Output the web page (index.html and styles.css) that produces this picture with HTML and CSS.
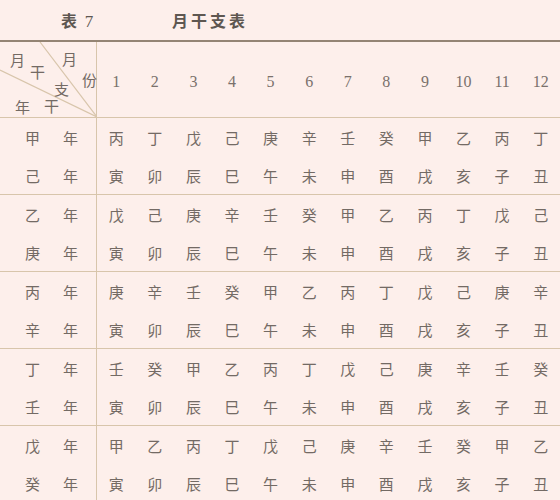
FILE: index.html
```html
<!DOCTYPE html>
<html lang="zh">
<head>
<meta charset="utf-8">
<link rel="stylesheet" href="styles.css">
</head>
<body>
<div class="page">
  <div class="title"><span class="t1">表 <span class="tn">7</span></span><span class="t2">月干支表</span></div>
  <div class="tbl">
    <div class="hrow">
      <div class="corner">
        <svg class="diag" width="97" height="75" viewBox="0 0 97 75"><line x1="0" y1="28" x2="97" y2="75"/><line x1="40" y1="0" x2="97" y2="75"/></svg>
        <span class="ck c1">月</span><span class="ck c2">干</span><span class="ck c3">月</span><span class="ck c4">份</span><span class="ck c5">支</span><span class="ck c6">年</span><span class="ck c7">干</span>
      </div>
      <div class="num">1</div><div class="num">2</div><div class="num">3</div><div class="num">4</div><div class="num">5</div><div class="num">6</div><div class="num">7</div><div class="num">8</div><div class="num">9</div><div class="num">10</div><div class="num">11</div><div class="num">12</div>
    </div>

    <div class="group">
      <div class="lab"><span>甲</span><span>年</span></div>
      <div class="c">丙</div><div class="c">丁</div><div class="c">戊</div><div class="c">己</div><div class="c">庚</div><div class="c">辛</div><div class="c">壬</div><div class="c">癸</div><div class="c">甲</div><div class="c">乙</div><div class="c">丙</div><div class="c">丁</div>
      <div class="lab"><span>己</span><span>年</span></div>
      <div class="c">寅</div><div class="c">卯</div><div class="c">辰</div><div class="c">巳</div><div class="c">午</div><div class="c">未</div><div class="c">申</div><div class="c">酉</div><div class="c">戌</div><div class="c">亥</div><div class="c">子</div><div class="c">丑</div>
    </div>

    <div class="group">
      <div class="lab"><span>乙</span><span>年</span></div>
      <div class="c">戊</div><div class="c">己</div><div class="c">庚</div><div class="c">辛</div><div class="c">壬</div><div class="c">癸</div><div class="c">甲</div><div class="c">乙</div><div class="c">丙</div><div class="c">丁</div><div class="c">戊</div><div class="c">己</div>
      <div class="lab"><span>庚</span><span>年</span></div>
      <div class="c">寅</div><div class="c">卯</div><div class="c">辰</div><div class="c">巳</div><div class="c">午</div><div class="c">未</div><div class="c">申</div><div class="c">酉</div><div class="c">戌</div><div class="c">亥</div><div class="c">子</div><div class="c">丑</div>
    </div>

    <div class="group">
      <div class="lab"><span>丙</span><span>年</span></div>
      <div class="c">庚</div><div class="c">辛</div><div class="c">壬</div><div class="c">癸</div><div class="c">甲</div><div class="c">乙</div><div class="c">丙</div><div class="c">丁</div><div class="c">戊</div><div class="c">己</div><div class="c">庚</div><div class="c">辛</div>
      <div class="lab"><span>辛</span><span>年</span></div>
      <div class="c">寅</div><div class="c">卯</div><div class="c">辰</div><div class="c">巳</div><div class="c">午</div><div class="c">未</div><div class="c">申</div><div class="c">酉</div><div class="c">戌</div><div class="c">亥</div><div class="c">子</div><div class="c">丑</div>
    </div>

    <div class="group">
      <div class="lab"><span>丁</span><span>年</span></div>
      <div class="c">壬</div><div class="c">癸</div><div class="c">甲</div><div class="c">乙</div><div class="c">丙</div><div class="c">丁</div><div class="c">戊</div><div class="c">己</div><div class="c">庚</div><div class="c">辛</div><div class="c">壬</div><div class="c">癸</div>
      <div class="lab"><span>壬</span><span>年</span></div>
      <div class="c">寅</div><div class="c">卯</div><div class="c">辰</div><div class="c">巳</div><div class="c">午</div><div class="c">未</div><div class="c">申</div><div class="c">酉</div><div class="c">戌</div><div class="c">亥</div><div class="c">子</div><div class="c">丑</div>
    </div>

    <div class="group">
      <div class="lab"><span>戊</span><span>年</span></div>
      <div class="c">甲</div><div class="c">乙</div><div class="c">丙</div><div class="c">丁</div><div class="c">戊</div><div class="c">己</div><div class="c">庚</div><div class="c">辛</div><div class="c">壬</div><div class="c">癸</div><div class="c">甲</div><div class="c">乙</div>
      <div class="lab"><span>癸</span><span>年</span></div>
      <div class="c">寅</div><div class="c">卯</div><div class="c">辰</div><div class="c">巳</div><div class="c">午</div><div class="c">未</div><div class="c">申</div><div class="c">酉</div><div class="c">戌</div><div class="c">亥</div><div class="c">子</div><div class="c">丑</div>
    </div>
  </div>
</div>
</body>
</html>
```

FILE: styles.css
```css
html, body {
  margin: 0;
  padding: 0;
  background: #fdefeb;
}
.page {
  width: 560px;
  height: 500px;
  overflow: hidden;
  background: #fdefeb;
  font-family: "Noto Sans CJK SC", "Noto Sans", sans-serif;
  color: #736a64;
}
.title {
  height: 40px;
  display: flex;
  align-items: center;
  font-size: 16px;
  font-weight: bold;
  color: #5e5751;
}
.t1 {
  margin-left: 61px;
  width: 111px;
}
.tn {
  font-family: "Liberation Serif", serif;
  font-weight: normal;
  font-size: 17px;
  margin-left: 4px;
}
.t2 {
  letter-spacing: 3px;
}
.tbl {
  border-top: 2px solid #948474;
}
.hrow {
  display: grid;
  grid-template-columns: 97px repeat(12, 1fr);
  height: 75px;
}
.corner {
  position: relative;
  border-right: 1px solid #d8c5ab;
}
.diag {
  position: absolute;
  left: 0;
  top: 0;
}
.diag line {
  stroke: #d8c5ab;
  stroke-width: 1.2;
}
.ck {
  position: absolute;
  font-size: 15px;
  line-height: 15px;
  width: 15px;
  text-align: center;
  margin-left: -7px;
  margin-top: -7px;
  color: #736a64;
}
.c1 { left: 17px; top: 17px; }
.c2 { left: 37px; top: 29px; }
.c3 { left: 69px; top: 16px; }
.c4 { left: 89px; top: 37px; }
.c5 { left: 61px; top: 46px; }
.c6 { left: 22px; top: 64px; }
.c7 { left: 51px; top: 63px; }
.num {
  display: flex;
  align-items: center;
  justify-content: center;
  padding-top: 5px;
  font-family: "Liberation Serif", serif;
  font-size: 16px;
  color: #7a716b;
}
.group {
  display: grid;
  grid-template-columns: 97px repeat(12, 1fr);
  grid-template-rows: 38px 38px;
  border-top: 1px solid #d8c5ab;
}
.lab {
  border-right: 1px solid #d8c5ab;
  display: flex;
  align-items: center;
  padding-left: 25px;
  gap: 23px;
  font-size: 15px;
}
.c {
  display: flex;
  align-items: center;
  justify-content: center;
  font-size: 15px;
}
```
